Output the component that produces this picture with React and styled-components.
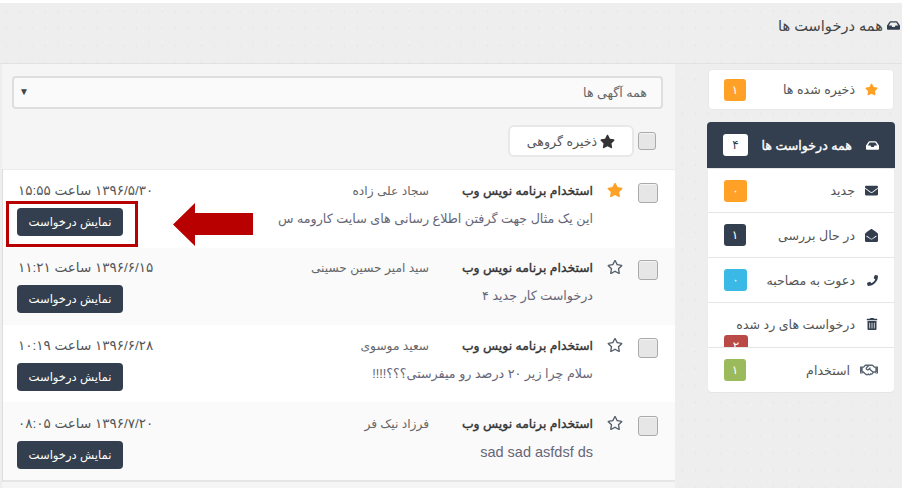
import React from 'react';
import styled, { createGlobalStyle } from 'styled-components';
import { FaStar, FaRegStar, FaEnvelope, FaEnvelopeOpen, FaPhone, FaTrashAlt, FaRegHandshake, FaInbox } from 'react-icons/fa';

const Global = createGlobalStyle`
  html, body { margin: 0; padding: 0; background: #fff; }
  body {
    font-family: "Liberation Sans", "DejaVu Sans", sans-serif;
    font-size: 12.6px;
    color: #555;
  }
`;

const Page = styled.div`
  position: relative;
  width: 902px;
  margin-top: 3px;
  direction: rtl;
  background-color: #eeeeee;
  background-image:
    radial-gradient(rgba(0, 0, 0, 0.018) 1px, transparent 1px),
    radial-gradient(rgba(255, 255, 255, 0.25) 1px, transparent 1px);
  background-size: 13px 17px, 19px 11px;
`;

const Header = styled.div`
  display: flex;
  align-items: center;
  gap: 4px;
  height: 61px;
  padding: 0 2px 16px 0;
  box-sizing: border-box;
  border-bottom: 1px solid #e2e2e2;
  font-size: 14.6px;
  color: #444;
`;

const Content = styled.div`
  display: flex;
  align-items: stretch;
`;

const Sidebar = styled.aside`
  width: 227px;
  flex: none;
  padding: 5px 8px 0 33px;
  box-sizing: border-box;
`;

const SavedCard = styled.div`
  display: flex;
  align-items: center;
  height: 41px;
  padding: 0 15px;
  box-sizing: border-box;
  background: #fff;
  border-radius: 4px;
  border: 1px solid #e9e9e9;
  margin-bottom: 12px;
`;

const SideIcon = styled.span`
  display: flex;
  justify-content: flex-start;
  width: ${p => p.$w || 14}px;
  flex: none;
  margin-left: ${p => p.$gap || 9}px;
  font-size: 13px;
  color: ${p => p.$color || '#333f4f'};
`;

const SideLabel = styled.span`
  flex: 1;
  color: #555;
`;

const ActiveLabel = styled.span`
  flex: 1;
  color: #fff;
  -webkit-text-stroke: 0.35px #fff;
`;

const Badge = styled.span`
  display: flex;
  align-items: center;
  justify-content: center;
  width: ${p => p.$w || 22}px;
  height: 22px;
  flex: none;
  border-radius: 3px;
  font-size: 12px;
  background: ${p => p.$bg};
  color: ${p => p.$fg || '#fff'};
`;

const SideList = styled.div`
  background: #fff;
  border-radius: 4px;
  box-shadow: 0 1px 1px #e4e4e4;
`;

const SideHead = styled.div`
  display: flex;
  align-items: center;
  height: 46px;
  margin: 0 -1px;
  padding: 0 16px;
  box-sizing: border-box;
  background: #333f4f;
  border-radius: 4px 4px 0 0;
`;

const SideItem = styled.div`
  display: flex;
  flex-wrap: ${p => (p.$wrap ? 'wrap' : 'nowrap')};
  align-content: flex-start;
  align-items: center;
  height: ${p => p.$h || 45}px;
  padding: ${p => (p.$wrap ? '10px 16px 0' : '0 16px')};
  box-sizing: border-box;
  overflow: hidden;
  border-top: 1px solid #e6e6e6;
`;

const ItemLine = styled.div`
  display: flex;
  align-items: center;
  width: 100%;
  height: 22px;
  flex: none;
`;

const WrappedBadge = styled(Badge)`
  margin-right: auto;
`;

const Main = styled.main`
  flex: 1;
  background: #f5f5f5;
  margin-left: 2px;
  padding: 12px 0 6px;
`;

const SelectBox = styled.div`
  display: flex;
  justify-content: space-between;
  align-items: center;
  height: 33px;
  margin: 0 12px 0 10px;
  padding: 0 14px 0 5px;
  box-sizing: border-box;
  border: 2px solid #dedede;
  border-radius: 4px;
  background: #fafafa;
  color: #666;
`;

const Arrow = styled.span`
  font-size: 10px;
  color: #444;
  margin-top: -3px;
`;

const Toolbar = styled.div`
  display: flex;
  align-items: center;
  gap: 4px;
  height: 32px;
  margin: 16px 0 12px;
  padding-right: 19px;
`;

const Check = styled.span`
  display: block;
  width: ${p => p.$size || 18}px;
  height: ${p => p.$size || 18}px;
  flex: none;
  margin-top: ${p => p.$top || 0}px;
  box-sizing: border-box;
  border: 1px solid #aaa;
  border-radius: 3px;
  background: #e6e6e6;
  box-shadow: inset 0 1px 1px #f6f6f6;
`;

const SaveButton = styled.button`
  display: flex;
  align-items: center;
  justify-content: center;
  gap: 3px;
  width: 126px;
  height: 32px;
  padding: 0;
  border: 2px solid #e8e8e8;
  border-radius: 6px;
  background: #fff;
  font: inherit;
  color: #555;
  svg { color: #333; font-size: 15px; }
`;

const Rows = styled.div`
  border-top: 1px solid #ececec;
  border-bottom: 2px solid #e6e6e6;
  box-shadow: -1px 0 0 #ddd;
  margin-left: 1px;
`;

const Row = styled.div`
  display: flex;
  align-items: flex-start;
  height: ${p => p.$h}px;
  padding: ${p => p.$top}px 17px 0 14px;
  box-sizing: border-box;
  background: ${p => (p.$alt ? '#fafafa' : '#fff')};
`;

const StarCell = styled.span`
  display: flex;
  justify-content: center;
  width: 17px;
  flex: none;
  margin: 0 15px 0 13px;
  font-size: 16px;
  color: ${p => (p.$on ? '#ffa126' : '#555e6b')};
`;

const RowBody = styled.div`
  flex: 1;
  min-width: 0;
`;

const TitleLine = styled.div`
  display: flex;
  height: 18px;
  line-height: 18px;
`;

const JobTitle = styled.span`
  width: 164px;
  flex: none;
  color: #333;
  font-size: 12.4px;
  -webkit-text-stroke: 0.4px #333;
`;

const Applicant = styled.span`
  color: #666;
  font-size: 12.2px;
`;

const Message = styled.div`
  margin-top: 10px;
  line-height: 18px;
  color: #667;
  font-size: ${p => (p.$latin ? '14.5px' : '12.7px')};
`;

const RowSide = styled.div`
  display: flex;
  flex-direction: column;
  align-items: flex-start;
  gap: 8px;
  direction: ltr;
  flex: none;
`;

const DateText = styled.div`
  height: 18px;
  line-height: 18px;
  margin-left: 1px;
  direction: rtl;
  color: #555;
  font-size: 13.5px;
`;

const ShowButton = styled.button`
  width: 106px;
  height: 28px;
  padding: 0;
  direction: rtl;
  border: 0;
  border-radius: 4px;
  background: #333f4f;
  color: #fff;
  font: inherit;
  font-size: 11.6px;
`;

const Highlight = styled.div`
  position: absolute;
  left: 6px;
  top: 198px;
  width: 132px;
  height: 46px;
  box-sizing: border-box;
  border: 3px solid #b80000;
`;

const BigArrow = styled.svg`
  position: absolute;
  left: 173px;
  top: 200px;
  width: 80px;
  height: 43px;
`;

const items = [
  { title: 'سجاد علی زاده', msg: 'این یک مثال جهت گرفتن اطلاع رسانی های سایت کارومه س', date: '۱۳۹۶/۵/۳۰ ساعت ۱۵:۵۵', on: true, h: 78, top: 12 },
  { title: 'سید امیر حسین حسینی', msg: 'درخواست کار جدید ۴', date: '۱۳۹۶/۶/۱۵ ساعت ۱۱:۲۱', alt: true, h: 77, top: 11 },
  { title: 'سعید موسوی', msg: 'سلام چرا زیر ۲۰ درصد رو میفرستی؟؟؟!!!!', date: '۱۳۹۶/۶/۲۸ ساعت ۱۰:۱۹', h: 77, top: 12 },
  { title: 'فرزاد نیک فر', msg: 'sad sad asfdsf ds', date: '۱۳۹۶/۷/۲۰ ساعت ۰۸:۰۵', alt: true, latin: true, h: 78, top: 13 },
];

const App = () => (
  <>
    <Global />
    <Page>
      <Header>
        <FaInbox size={13} color="#333f4f" />
        <span>همه درخواست ها</span>
      </Header>
      <Content>
        <Sidebar>
          <SavedCard>
            <SideIcon $color="#ffa126"><FaStar /></SideIcon>
            <SideLabel>ذخیره شده ها</SideLabel>
            <Badge $bg="#ffa126">۱</Badge>
          </SavedCard>
          <SideList>
            <SideHead>
              <SideIcon $color="#fff" $gap={13}><FaInbox /></SideIcon>
              <ActiveLabel>همه درخواست ها</ActiveLabel>
              <Badge $bg="#fff" $fg="#333f4f" $w={25}>۴</Badge>
            </SideHead>
            <SideItem $h={44}>
              <SideIcon><FaEnvelope /></SideIcon>
              <SideLabel>جدید</SideLabel>
              <Badge $bg="#ffa126" $w={23}>۰</Badge>
            </SideItem>
            <SideItem>
              <SideIcon><FaEnvelopeOpen /></SideIcon>
              <SideLabel>در حال بررسی</SideLabel>
              <Badge $bg="#333f4f">۱</Badge>
            </SideItem>
            <SideItem>
              <SideIcon><FaPhone size={11} /></SideIcon>
              <SideLabel>دعوت به مصاحبه</SideLabel>
              <Badge $bg="#3bb9e6" $w={23}>۰</Badge>
            </SideItem>
            <SideItem $wrap>
              <ItemLine>
                <SideIcon><FaTrashAlt size={12} /></SideIcon>
                <SideLabel>درخواست های رد شده</SideLabel>
              </ItemLine>
              <WrappedBadge $bg="#b94a48" $w={24}>۲</WrappedBadge>
            </SideItem>
            <SideItem>
              <SideIcon $w={18} $gap={10} $color="#5a6470"><FaRegHandshake size={18} /></SideIcon>
              <SideLabel>استخدام</SideLabel>
              <Badge $bg="#9aba5c">۱</Badge>
            </SideItem>
          </SideList>
        </Sidebar>
        <Main>
          <SelectBox>
            <span>همه آگهی ها</span>
            <Arrow>▼</Arrow>
          </SelectBox>
          <Toolbar>
            <Check />
            <SaveButton><FaStar />ذخیره گروهی</SaveButton>
          </Toolbar>
          <Rows>
            {items.map(it => (
              <Row key={it.date} $alt={it.alt} $h={it.h} $top={it.top}>
                <Check $size={20} $top={1} />
                <StarCell $on={it.on}>{it.on ? <FaStar /> : <FaRegStar />}</StarCell>
                <RowBody>
                  <TitleLine>
                    <JobTitle>استخدام برنامه نویس وب</JobTitle>
                    <Applicant>{it.title}</Applicant>
                  </TitleLine>
                  <Message $latin={it.latin}>{it.msg}</Message>
                </RowBody>
                <RowSide>
                  <DateText>{it.date}</DateText>
                  <ShowButton>نمایش درخواست</ShowButton>
                </RowSide>
              </Row>
            ))}
          </Rows>
        </Main>
      </Content>
      <Highlight />
      <BigArrow viewBox="0 0 80 43">
        <path d="M0 21.5 L22 0 V10 H80 V32 H22 V43 Z" fill="#b80000" />
      </BigArrow>
    </Page>
  </>
);

export default App;
